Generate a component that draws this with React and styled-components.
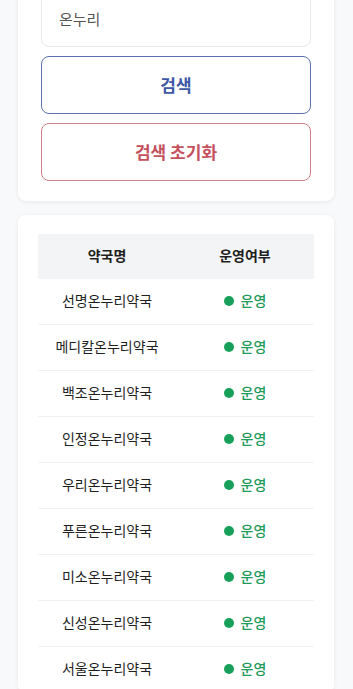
import React from "react";
import styled, { createGlobalStyle } from "styled-components";

const Global = createGlobalStyle`
  html, body { margin: 0; padding: 0; background: #f8f9fa; }
  body { font-family: "Noto Sans CJK KR", "Noto Sans", sans-serif; color: #222; }
  * { box-sizing: border-box; }
`;

const Page = styled.div`
  display: flex;
  flex-direction: column;
  gap: 14px;
  padding: 0 19px 0 18px;
  margin-top: -31px;
`;

const Card = styled.section`
  background: #fff;
  border-radius: 8px;
  box-shadow: 0 1px 4px rgba(0, 0, 0, 0.08);
  padding: ${(p) => p.$pad};
  display: flex;
  flex-direction: column;
  gap: 9px;
`;

const Input = styled.div`
  height: 58px;
  border: 1px solid #e5e7eb;
  border-radius: 8px;
  display: flex;
  align-items: center;
  padding: 0 17px;
  font-size: 15px;
  color: #555;
`;

const Button = styled.button`
  height: 58px;
  width: 100%;
  background: #fff;
  border: 1px solid ${(p) => p.$border};
  border-radius: 8px;
  color: ${(p) => p.$color};
  font-family: inherit;
  font-size: 17px;
  font-weight: 700;
  display: flex;
  align-items: center;
  justify-content: center;
  padding: 0 0 2px;
`;

const Table = styled.div`
  display: flex;
  flex-direction: column;
`;

const Row = styled.div`
  display: grid;
  grid-template-columns: 1fr 1fr;
  height: ${(p) => (p.$head ? "45px" : "46px")};
  background: ${(p) => (p.$head ? "#f3f4f6" : "#fff")};
  border-bottom: ${(p) => (p.$head ? "none" : "1px solid #f0f1f3")};
  font-size: 14px;
  font-weight: ${(p) => (p.$head ? 700 : 400)};
  color: #1f1f1f;
`;

const Cell = styled.div`
  display: flex;
  align-items: center;
  justify-content: center;
  gap: 7px;
  padding-bottom: 3px;
`;

const Dot = styled.span`
  width: 10px;
  height: 10px;
  border-radius: 50%;
  background: #17a05a;
  margin-top: 2px;
`;

const Status = styled.span`
  color: #1f9a5a;
  font-weight: 500;
`;

const names = [
  "선명온누리약국",
  "메디칼온누리약국",
  "백조온누리약국",
  "인정온누리약국",
  "우리온누리약국",
  "푸른온누리약국",
  "미소온누리약국",
  "신성온누리약국",
  "서울온누리약국",
];

export default function App() {
  return (
    <>
      <Global />
      <Page>
        <Card $pad="20px 23px 20px 23px">
          <Input>온누리</Input>
          <Button $border="#5a6fae" $color="#3d58a6">검색</Button>
          <Button $border="#cf7f86" $color="#c4515c">검색 초기화</Button>
        </Card>
        <Card $pad="19px 20px 0 20px">
          <Table>
            <Row $head>
              <Cell>약국명</Cell>
              <Cell>운영여부</Cell>
            </Row>
            {names.map((n) => (
              <Row key={n}>
                <Cell>{n}</Cell>
                <Cell>
                  <Dot />
                  <Status>운영</Status>
                </Cell>
              </Row>
            ))}
          </Table>
        </Card>
      </Page>
    </>
  );
}
